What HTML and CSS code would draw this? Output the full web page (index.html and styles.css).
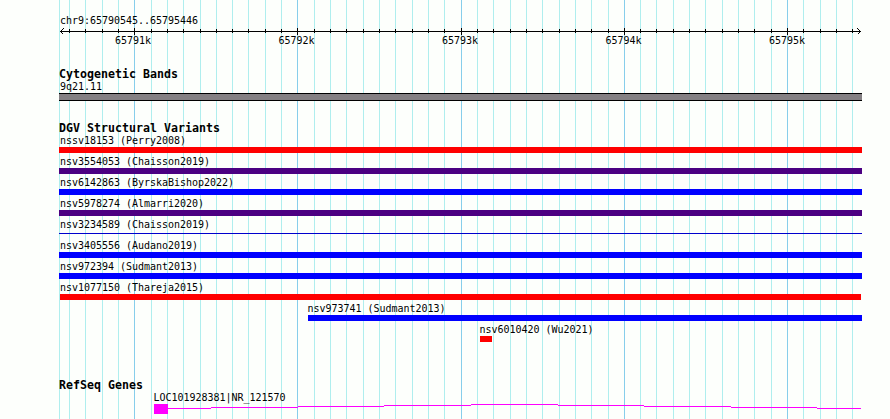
FILE: index.html
```html
<!DOCTYPE html>
<html>

<head>
	<meta charset="utf-8">
	<title>chr9:65790545..65795446</title>
	<link rel="stylesheet" href="styles.css">
</head>

<body>

	<div class="browser">

		<svg class="grid" width="890" height="419" shape-rendering="crispEdges">
			<path class="minor" d="M59.5 0v419M69.5 0v419M85.5 0v419M102.5 0v419M118.5 0v419M151.5 0v419M167.5 0v419M183.5 0v419M200.5 0v419M216.5 0v419M232.5 0v419M248.5 0v419M265.5 0v419M281.5 0v419M314.5 0v419M330.5 0v419M346.5 0v419M363.5 0v419M379.5 0v419M395.5 0v419M412.5 0v419M428.5 0v419M444.5 0v419M477.5 0v419M493.5 0v419M510.5 0v419M526.5 0v419M542.5 0v419M559.5 0v419M575.5 0v419M591.5 0v419M608.5 0v419M640.5 0v419M656.5 0v419M673.5 0v419M689.5 0v419M705.5 0v419M722.5 0v419M738.5 0v419M754.5 0v419M771.5 0v419M803.5 0v419M820.5 0v419M836.5 0v419M852.5 0v419"/>
			<path class="major" d="M134.5 0v419M297.5 0v419M461.5 0v419M624.5 0v419M787.5 0v419"/>
		</svg>

		<div class="panel">

			<div class="ruler">
				<div class="label">chr9:65790545..65795446</div>
				<svg class="scale" viewBox="59 27 803 9" width="803" height="9" shape-rendering="crispEdges">
					<path d="M60 31.5H861"/>
					<path d="M69.5 29v4M85.5 29v4M102.5 29v4M118.5 29v4M151.5 29v4M167.5 29v4M183.5 29v4M200.5 29v4M216.5 29v4M232.5 29v4M248.5 29v4M265.5 29v4M281.5 29v4M314.5 29v4M330.5 29v4M346.5 29v4M363.5 29v4M379.5 29v4M395.5 29v4M412.5 29v4M428.5 29v4M444.5 29v4M477.5 29v4M493.5 29v4M510.5 29v4M526.5 29v4M542.5 29v4M559.5 29v4M575.5 29v4M591.5 29v4M608.5 29v4M640.5 29v4M656.5 29v4M673.5 29v4M689.5 29v4M705.5 29v4M722.5 29v4M738.5 29v4M754.5 29v4M771.5 29v4M803.5 29v4M820.5 29v4M836.5 29v4M852.5 29v4"/>
					<path d="M134.5 28v7M297.5 28v7M461.5 28v7M624.5 28v7M787.5 28v7"/>
					<path d="M63.5 28.5L60.5 31.5L63.5 34.5M857.5 28.5L860.5 31.5L857.5 34.5"/>
				</svg>
				<div class="positions">
					<span>65791k</span>
					<span>65792k</span>
					<span>65793k</span>
					<span>65794k</span>
					<span>65795k</span>
				</div>
			</div>

			<div class="track cytobands">
				<div class="title">Cytogenetic Bands</div>
				<div class="label">9q21.11</div>
				<div class="band"></div>
			</div>

			<div class="track variants">
				<div class="title">DGV Structural Variants</div>
				<div class="feature">
					<div class="label">nssv18153 (Perry2008)</div>
					<div class="bar loss"></div>
				</div>
				<div class="feature">
					<div class="label">nsv3554053 (Chaisson2019)</div>
					<div class="bar complex"></div>
				</div>
				<div class="feature">
					<div class="label">nsv6142863 (ByrskaBishop2022)</div>
					<div class="bar gain"></div>
				</div>
				<div class="feature">
					<div class="label">nsv5978274 (Almarri2020)</div>
					<div class="bar complex"></div>
				</div>
				<div class="feature">
					<div class="label">nsv3234589 (Chaisson2019)</div>
					<div class="bar thin"></div>
				</div>
				<div class="feature">
					<div class="label">nsv3405556 (Audano2019)</div>
					<div class="bar gain"></div>
				</div>
				<div class="feature">
					<div class="label">nsv972394 (Sudmant2013)</div>
					<div class="bar gain"></div>
				</div>
				<div class="feature">
					<div class="label">nsv1077150 (Thareja2015)</div>
					<div class="bar loss inner"></div>
				</div>
				<div class="feature sudmant">
					<div class="label">nsv973741 (Sudmant2013)</div>
					<div class="bar gain"></div>
				</div>
				<div class="feature wu">
					<div class="label">nsv6010420 (Wu2021)</div>
					<div class="bar loss short"></div>
				</div>
			</div>

			<div class="track genes">
				<div class="title">RefSeq Genes</div>
				<div class="gene">
					<div class="label">LOC101928381|NR_121570</div>
					<svg class="transcript" viewBox="154 404 708 10" width="708" height="10" shape-rendering="crispEdges">
						<rect x="154" y="404" width="14" height="10"/>
						<path d="M168 408.5H211M211 407.5H298M298 406.5H384M384 405.5H471M471 404.5H558M558 405.5H644M644 406.5H731M731 407.5H817M817 408.5H861"/>
					</svg>
				</div>
			</div>

		</div>
	</div>

</body>
</html>
```
FILE: styles.css
```css
body {
	margin: 0;
	background: #fdfffc;
	color: black;
	font-family: "DejaVu Sans Mono", monospace;
	font-size: 10px;
}
.browser {
	position: relative;
	width: 890px;
	height: 419px;
	overflow: hidden;
}
.grid {
	position: absolute;
	top: 0;
	left: 0;
}
.grid path {
	fill: none;
	stroke-width: 1px;
}
.grid .minor {
	stroke: #afeeee;
}
.grid .major {
	stroke: #87ceeb;
}
.panel {
	position: relative;
	width: 803px;
	padding: 15px 0 0 59px;
}
.label {
	height: 12px;
	padding-left: 1px;
	line-height: 12px;
	letter-spacing: -0.02px;
	white-space: pre;
}
.title {
	height: 14px;
	line-height: 14px;
	font-size: 11.6px;
	font-weight: bold;
	letter-spacing: 0.016px;
	white-space: pre;
}
.ruler {
	height: 52px;
}
.scale {
	display: block;
}
.scale path {
	fill: none;
	stroke: black;
}
.positions {
	display: flex;
	justify-content: space-between;
	width: 690px;
	margin-left: 56px;
	line-height: 10px;
	letter-spacing: -0.02px;
}
.cytobands {
	height: 54px;
}
.band {
	height: 6px;
	background: #848083;
	border-top: 1px solid black;
	border-bottom: 1px solid black;
}
.variants {
	height: 257px;
}
.feature {
	height: 21px;
}
.bar {
	height: 6px;
}
.loss {
	background: #ff0000;
}
.gain {
	background: #0000ff;
}
.complex {
	background: #4b0082;
}
.thin {
	height: 1px;
	margin-top: 2px;
	background: #0000cd;
}
.inner {
	margin: 0 1px;
}
.sudmant {
	margin-left: 249px;
}
.wu {
	margin-left: 421px;
}
.sudmant .label,
.wu .label,
.gene .label {
	padding-left: 0;
	text-indent: -0.5px;
}
.short {
	width: 12px;
}
.gene {
	margin-left: 95px;
}
.transcript {
	display: block;
	fill: #ff00ff;
}
.transcript path {
	fill: none;
	stroke: #ff00ff;
}
```
